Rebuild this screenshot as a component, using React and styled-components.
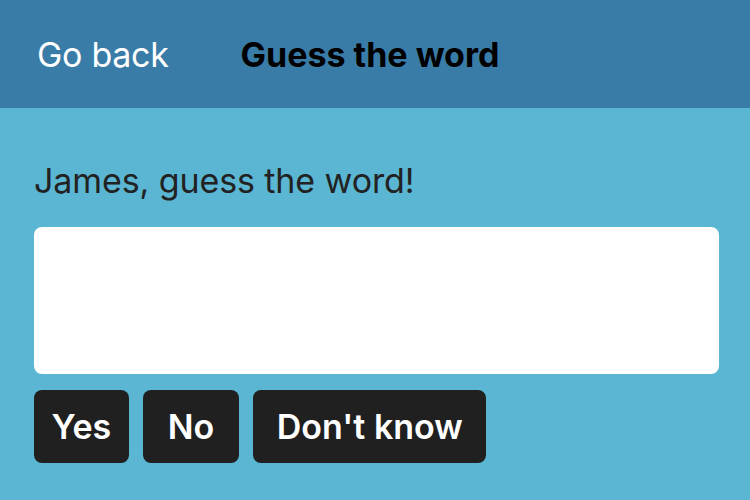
import React from "react";
import styled, { createGlobalStyle } from "styled-components";

const Global = createGlobalStyle`
  html, body { margin: 0; padding: 0; }
  body {
    width: 750px;
    height: 500px;
    overflow: hidden;
    background: #5ab6d2;
    font-family: Inter, "Noto Sans", sans-serif;
  }
`;

const Page = styled.div`
  display: flex;
  flex-direction: column;
  width: 750px;
  height: 500px;
  background: #5ab6d2;
`;

const Header = styled.header`
  display: flex;
  align-items: center;
  height: 108px;
  padding-left: 37px;
  gap: 72px;
  background: #3a7ca8;
  box-sizing: border-box;
`;

const BackLink = styled.span`
  color: #ffffff;
  font-size: 34px;
  font-weight: 400;
  letter-spacing: -0.3px;
`;

const Title = styled.h1`
  margin: 0;
  color: #000000;
  font-size: 34px;
  font-weight: 700;
  letter-spacing: 0;
`;

const Content = styled.main`
  display: flex;
  flex-direction: column;
  padding: 53px 31px 0 34px;
`;

const Prompt = styled.p`
  margin: 0 0 26px 0;
  color: #222222;
  font-size: 34px;
  font-weight: 400;
  letter-spacing: -0.1px;
  line-height: 40px;
`;

const Input = styled.input`
  height: 147px;
  border: none;
  border-radius: 8px;
  background: #ffffff;
  box-sizing: border-box;
  outline: none;
  padding: 0 16px;
  font-size: 30px;
  font-family: inherit;
`;

const Buttons = styled.div`
  display: flex;
  gap: 14px;
  margin-top: 16px;
`;

const Button = styled.button`
  height: 73px;
  padding: 0 ${(p) => p.$pad}px;
  border: none;
  border-radius: 8px;
  background: #202020;
  color: #ffffff;
  font-family: inherit;
  font-size: 34px;
  font-weight: 600;
  letter-spacing: 0;
  cursor: pointer;
`;

export default function App() {
  return (
    <>
      <Global />
      <Page>
        <Header>
          <BackLink>Go back</BackLink>
          <Title>Guess the word</Title>
        </Header>
        <Content>
          <Prompt>James, guess the word!</Prompt>
          <Input type="text" />
          <Buttons>
            <Button $pad={17.5}>Yes</Button>
            <Button $pad={25}>No</Button>
            <Button $pad={23.5}>Don't know</Button>
          </Buttons>
        </Content>
      </Page>
    </>
  );
}
